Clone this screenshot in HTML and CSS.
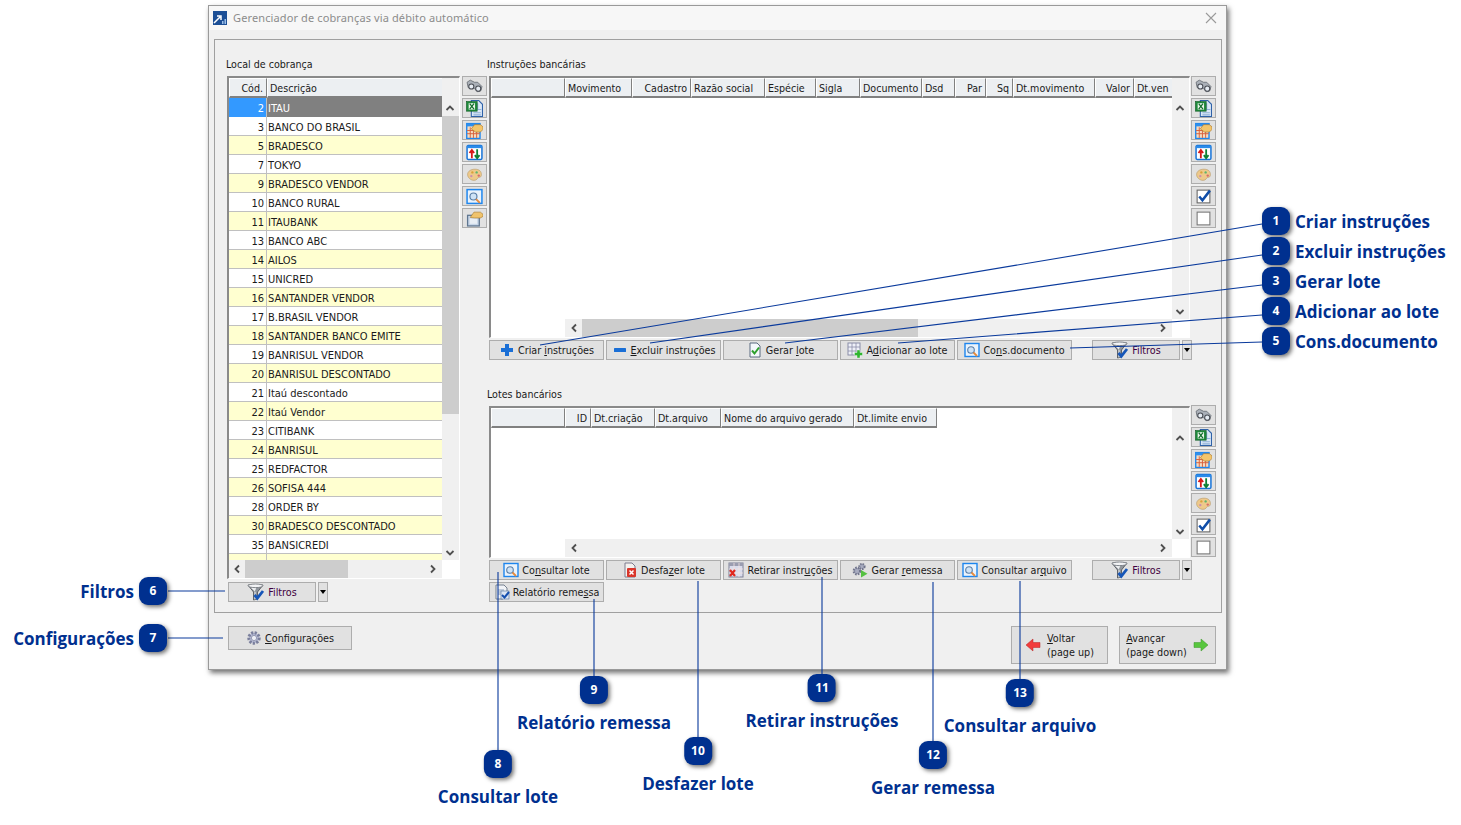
FILE: index.html
```html
<!DOCTYPE html>
<html lang="pt-BR">
<head>
<meta charset="utf-8">
<title>Gerenciador de cobranças via débito automático</title>
<link rel="stylesheet" href="styles.css">
</head>
<body>
<svg class="sprite" width="0" height="0" aria-hidden="true">
  <symbol id="i-bino" viewBox="0 0 16 16"><path d="M1 4l3-2 4 2 3 0 4 4-1 4-3 1-3-3-3 0-3-1z" fill="#aab0b8" stroke="#5c6168" stroke-width=".7"/><circle cx="5" cy="8" r="2.400" fill="#e6ecf3" stroke="#4a4e55" stroke-width="1"/><circle cx="11.500" cy="10" r="2.400" fill="#e6ecf3" stroke="#4a4e55" stroke-width="1"/></symbol>
  <symbol id="i-excel" viewBox="0 0 16 16"><path d="M5 0.500h7l3.500 3.500v11.500H5z" fill="#dbe8f7" stroke="#2f62a8"/><path d="M7 12h7M7 14h7M11 3v6h3.500" stroke="#8fb0d8" fill="none"/><rect x="0.500" y="1.500" width="10" height="9" fill="#1f8a3b" stroke="#0e5c22" stroke-width=".6"/><rect x="2.500" y="3" width="6" height="6" fill="#e9f5ea"/><path d="M3.500 3.500l4 5M7.500 3.500l-4 5" stroke="#12702c" stroke-width="1.200"/></symbol>
  <symbol id="i-tablehand" viewBox="0 0 16 16"><rect x="0.700" y="1.500" width="12.500" height="14" fill="#f6dcc0" stroke="#1e86ee" stroke-width="1.300"/><rect x="0.700" y="1.500" width="12.500" height="2.600" fill="#2f8fec"/><path d="M4 5v10M7 5v10M10 5v10M1 8h12M1 11h12" stroke="#d8613c" stroke-width=".9"/><path d="M5 6.500l3-4h5.500L16 4.500v2.500l-2.500 2.500H9z" fill="#f3c56b" stroke="#a9762a" stroke-width=".6"/></symbol>
  <symbol id="i-sort" viewBox="0 0 16 16"><rect x="1" y="1.500" width="14" height="13" rx="1" fill="#fff" stroke="#1673d8" stroke-width="1.400"/><rect x="1" y="1.500" width="14" height="2.400" fill="#2b8bea"/><path d="M5.500 13.500V6M3.300 8.500l2.200-2.900 2.200 2.900" fill="none" stroke="#d81818" stroke-width="1.700"/><path d="M10.500 5v8M8.300 10.500l2.200 2.900 2.200-2.900" fill="none" stroke="#0f7f35" stroke-width="1.700"/></symbol>
  <symbol id="i-palette" viewBox="0 0 16 16"><path d="M1.500 8c0-3 3-5 7-5s6 2 6 5-2 2.500-3 3-1 2.500-4 2.500S1.500 11 1.500 8z" fill="#eec98a" stroke="#b99a66" stroke-width=".6"/><circle cx="6" cy="6" r="1.100" fill="#d9a13a"/><circle cx="10" cy="6" r="1.100" fill="#5db56c"/><circle cx="12" cy="9" r="1.100" fill="#d86a6a"/><circle cx="5" cy="9.500" r="1.100" fill="#c98fb0"/></symbol>
  <symbol id="i-find" viewBox="0 0 16 16"><rect x="1" y="1.500" width="14" height="13" fill="#eaf3fc" stroke="#1e86ee" stroke-width="1.400"/><circle cx="7" cy="8" r="3.300" fill="#cfe3f6" stroke="#5a7ea6" stroke-width="1.100"/><path d="M9.500 10.500l3.500 3.500" stroke="#e78b3c" stroke-width="1.800"/></symbol>
  <symbol id="i-handbox" viewBox="0 0 16 16"><rect x="1.500" y="5" width="11" height="10" fill="#c7d6e8" stroke="#5f7690" stroke-width="1.200"/><rect x="3.500" y="8" width="7" height="5" fill="#e8eef5"/><path d="M4 7l3.500-5h6L16 4v2l-2.500 1.500H8z" fill="#f0c36c" stroke="#a87a2c" stroke-width=".6"/></symbol>
  <symbol id="i-check" viewBox="0 0 16 16"><rect x="2" y="2" width="12" height="12" fill="#fff" stroke="#666" stroke-width="1"/><path d="M4 8l3 3.500L14 2.500" fill="none" stroke="#0f4da8" stroke-width="2.400"/></symbol>
  <symbol id="i-uncheck" viewBox="0 0 16 16"><rect x="2" y="2" width="12" height="12" fill="#fff" stroke="#777" stroke-width="1"/></symbol>
  <symbol id="i-plus" viewBox="0 0 16 16"><path d="M6 2h4v4h4v4h-4v4H6v-4H2V6h4z" fill="#1a6fd6"/></symbol>
  <symbol id="i-minus" viewBox="0 0 16 16"><rect x="2" y="6" width="12" height="4" rx=".6" fill="#1a6fd6"/></symbol>
  <symbol id="i-doccheck" viewBox="0 0 16 16"><path d="M3 1h7l3 3v11H3z" fill="#f4f7fb" stroke="#5a6b80"/><path d="M5 8.500l2.500 3L12 5.500" fill="none" stroke="#2da02d" stroke-width="2"/></symbol>
  <symbol id="i-gridplus" viewBox="0 0 16 16"><rect x="1" y="1" width="12" height="12" fill="#eef0f8" stroke="#8a8ea8"/><path d="M5 1v12M9 1v12M1 5h12M1 9h12" stroke="#8a8ea8" stroke-width=".8"/><path d="M10 8h3v2.500h2.500v3H13V16h-3v-2.500H7.500v-3H10z" fill="#2fb52f" stroke="#fff" stroke-width=".4"/></symbol>
  <symbol id="i-filter" viewBox="0 0 18 18"><path d="M1 2h15l-5.500 7v7l-4 1V9z" fill="#8f959c" stroke="#55595f" stroke-width=".9"/><path d="M3.500 4.500h6L7.500 9v7.500l1-.3V9z" fill="#eceef0"/><ellipse cx="8.500" cy="2.800" rx="7.500" ry="1.800" fill="#f2f3f5" stroke="#6d7278" stroke-width=".8"/><path d="M7.500 12l2.800 3.200L16 8" fill="none" stroke="#1656b8" stroke-width="2.800"/></symbol>
  <symbol id="i-gear" viewBox="0 0 16 16"><circle cx="8" cy="8" r="5.200" fill="#b9bdd6" stroke="#7a7f9c" stroke-width="3" stroke-dasharray="2.200 1.300"/><circle cx="8" cy="8" r="2.600" fill="#eef0f6" stroke="#7a7f9c" stroke-width=".7"/></symbol>
  <symbol id="i-docx" viewBox="0 0 16 16"><path d="M3 1h7l3 3v11H3z" fill="#f4f1ee" stroke="#7c7c8e"/><rect x="5" y="6" width="9" height="9" rx="1" fill="#d9362b"/><path d="M7.500 8.500l4 4M11.500 8.500l-4 4" stroke="#fff" stroke-width="1.500"/></symbol>
  <symbol id="i-gridx" viewBox="0 0 16 16"><rect x="1" y="1" width="14" height="14" fill="#d9dcec" stroke="#7f8298"/><rect x="1" y="1" width="14" height="3" fill="#9a9db0"/><path d="M6 1v14M11 1v14M1 7h14M1 11h14" stroke="#f3e3e3" stroke-width=".8"/><path d="M2 8l5 6M7 8l-5 6" stroke="#e0281e" stroke-width="2.200"/></symbol>
  <symbol id="i-gears" viewBox="0 0 16 16"><circle cx="5" cy="9" r="3.200" fill="#a8acc0" stroke="#71758c" stroke-width="2.400" stroke-dasharray="1.500 1.100"/><circle cx="10" cy="4.500" r="2.600" fill="#a8acc0" stroke="#71758c" stroke-width="2" stroke-dasharray="1.500 1"/><path d="M9 8l6.500 3.700L9 15.500z" fill="#56c142"/></symbol>
  <symbol id="i-report" viewBox="0 0 16 16"><path d="M2 1h8l3 3v4H9v7H2z" fill="#f1f3f7" stroke="#75808f"/><path d="M4 6h6M4 8h4M4 10h4" stroke="#8ea3bd"/><rect x="7" y="7" width="8" height="8" fill="#dbe5f3" stroke="#50709a" stroke-width=".6"/><path d="M8 11l2.500 2.500L15 8" fill="none" stroke="#144fae" stroke-width="2"/></symbol>
  <symbol id="i-left" viewBox="0 0 16 16"><path d="M1 8l7-6v3.500h7v5H8V14z" fill="#f23c3c" stroke="#b52525" stroke-width=".5"/></symbol>
  <symbol id="i-right" viewBox="0 0 16 16"><path d="M15 8L8 2v3.500H1v5h7V14z" fill="#58c63e" stroke="#3a942a" stroke-width=".5"/></symbol>
  <symbol id="i-up" viewBox="0 0 10 10"><path d="M1.500 7L5 3.500 8.500 7" fill="none" stroke="#505050" stroke-width="1.800"/></symbol>
  <symbol id="i-down" viewBox="0 0 10 10"><path d="M1.500 3L5 6.500 8.500 3" fill="none" stroke="#505050" stroke-width="1.800"/></symbol>
  <symbol id="i-prev" viewBox="0 0 10 10"><path d="M7 1.500L3.500 5 7 8.500" fill="none" stroke="#505050" stroke-width="1.800"/></symbol>
  <symbol id="i-next" viewBox="0 0 10 10"><path d="M3 1.500L6.500 5 3 8.500" fill="none" stroke="#505050" stroke-width="1.800"/></symbol>
</svg>

<main class="window">
  <header class="titlebar">
    <svg class="logo" viewBox="0 0 14 14"><rect width="14" height="14" fill="#1c4f96"/><path d="M1 12l6-6M4 5h4v4" fill="none" stroke="#fff" stroke-width="1.500"/><path d="M9 13v-3h1.500v3zM11.500 13V8H13v5z" fill="#9cc0ea"/></svg>
    <span class="title">Gerenciador de cobranças via débito automático</span>
    <svg class="close" viewBox="0 0 12 12"><path d="M1 1l10 10M11 1L1 11" stroke="#9a9a9a" stroke-width="1.100"/></svg>
  </header>

  <section class="group">
    <div class="col-left">
      <div class="label">Local de cobrança</div>
      <div class="with-tools">
        <div class="frame frame-left">
          <div class="grid-area">
            <div class="head">
              <div class="hc hc-cod r">Cód.</div>
              <div class="hc hc-desc">Descrição</div>
            </div>
            <div class="rows">
              <div class="row sel"><span class="code">2</span><span class="desc">ITAU</span></div>
              <div class="row"><span class="code">3</span><span class="desc">BANCO DO BRASIL</span></div>
              <div class="row alt"><span class="code">5</span><span class="desc">BRADESCO</span></div>
              <div class="row"><span class="code">7</span><span class="desc">TOKYO</span></div>
              <div class="row alt"><span class="code">9</span><span class="desc">BRADESCO VENDOR</span></div>
              <div class="row"><span class="code">10</span><span class="desc">BANCO RURAL</span></div>
              <div class="row alt"><span class="code">11</span><span class="desc">ITAUBANK</span></div>
              <div class="row"><span class="code">13</span><span class="desc">BANCO ABC</span></div>
              <div class="row alt"><span class="code">14</span><span class="desc">AILOS</span></div>
              <div class="row"><span class="code">15</span><span class="desc">UNICRED</span></div>
              <div class="row alt"><span class="code">16</span><span class="desc">SANTANDER VENDOR</span></div>
              <div class="row"><span class="code">17</span><span class="desc">B.BRASIL VENDOR</span></div>
              <div class="row alt"><span class="code">18</span><span class="desc">SANTANDER BANCO EMITE</span></div>
              <div class="row"><span class="code">19</span><span class="desc">BANRISUL VENDOR</span></div>
              <div class="row alt"><span class="code">20</span><span class="desc">BANRISUL DESCONTADO</span></div>
              <div class="row"><span class="code">21</span><span class="desc">Itaú descontado</span></div>
              <div class="row alt"><span class="code">22</span><span class="desc">Itaú Vendor</span></div>
              <div class="row"><span class="code">23</span><span class="desc">CITIBANK</span></div>
              <div class="row alt"><span class="code">24</span><span class="desc">BANRISUL</span></div>
              <div class="row"><span class="code">25</span><span class="desc">REDFACTOR</span></div>
              <div class="row alt"><span class="code">26</span><span class="desc">SOFISA 444</span></div>
              <div class="row"><span class="code">28</span><span class="desc">ORDER BY</span></div>
              <div class="row alt"><span class="code">30</span><span class="desc">BRADESCO DESCONTADO</span></div>
              <div class="row"><span class="code">35</span><span class="desc">BANSICREDI</span></div>
              <div class="row alt"><span class="code">36</span><span class="desc">ECOCREDI</span></div>
            </div>
          </div>
          <div class="vbar vbar-left">
            <svg class="chev"><use href="#i-up"/></svg>
            <div class="vthumb"></div>
            <svg class="chev"><use href="#i-down"/></svg>
          </div>
          <div class="hbar hbar-left">
            <svg class="chev"><use href="#i-prev"/></svg>
            <div class="hthumb hthumb-left"></div>
            <svg class="chev end"><use href="#i-next"/></svg>
          </div>
        </div>
        <div class="tools">
          <div class="tool"><svg class="ti"><use href="#i-bino"/></svg></div>
          <div class="tool"><svg class="ti"><use href="#i-excel"/></svg></div>
          <div class="tool"><svg class="ti"><use href="#i-tablehand"/></svg></div>
          <div class="tool"><svg class="ti"><use href="#i-sort"/></svg></div>
          <div class="tool"><svg class="ti"><use href="#i-palette"/></svg></div>
          <div class="tool"><svg class="ti"><use href="#i-find"/></svg></div>
          <div class="tool"><svg class="ti"><use href="#i-handbox"/></svg></div>
        </div>
      </div>
      <div class="btnrow btnrow-left">
        <div class="btn btn-filter"><svg class="bi bi-f"><use href="#i-filter"/></svg><span class="ftxt">Filtros</span></div>
        <div class="drop"></div>
      </div>
    </div>

    <div class="col-right">
      <div class="label">Instruções bancárias</div>
      <div class="with-tools">
        <div class="frame frame-top">
          <div class="grid-area">
            <div class="head">
              <div class="hc w-blank"></div>
              <div class="hc w-mov">Movimento</div>
              <div class="hc w-cad r">Cadastro</div>
              <div class="hc w-raz">Razão social</div>
              <div class="hc w-esp">Espécie</div>
              <div class="hc w-sig">Sigla</div>
              <div class="hc w-doc r">Documento</div>
              <div class="hc w-dsd">Dsd</div>
              <div class="hc w-par r">Par</div>
              <div class="hc w-sq r">Sq</div>
              <div class="hc w-dtm">Dt.movimento</div>
              <div class="hc w-val r">Valor</div>
              <div class="hc w-dtv">Dt.ven</div>
            </div>
          </div>
          <div class="vbar">
            <svg class="chev"><use href="#i-up"/></svg>
            <svg class="chev bottom"><use href="#i-down"/></svg>
          </div>
          <div class="hbar hbar-wide">
            <svg class="chev"><use href="#i-prev"/></svg>
            <div class="hthumb hthumb-top"></div>
            <svg class="chev end"><use href="#i-next"/></svg>
          </div>
        </div>
        <div class="tools">
          <div class="tool"><svg class="ti"><use href="#i-bino"/></svg></div>
          <div class="tool"><svg class="ti"><use href="#i-excel"/></svg></div>
          <div class="tool"><svg class="ti"><use href="#i-tablehand"/></svg></div>
          <div class="tool"><svg class="ti"><use href="#i-sort"/></svg></div>
          <div class="tool"><svg class="ti"><use href="#i-palette"/></svg></div>
          <div class="tool"><svg class="ti"><use href="#i-check"/></svg></div>
          <div class="tool"><svg class="ti"><use href="#i-uncheck"/></svg></div>
        </div>
      </div>
      <div class="btnrow">
        <div class="btn"><svg class="bi"><use href="#i-plus"/></svg><span>Criar <u>i</u>nstruções</span></div>
        <div class="btn"><svg class="bi"><use href="#i-minus"/></svg><span><u>E</u>xcluir instruções</span></div>
        <div class="btn"><svg class="bi"><use href="#i-doccheck"/></svg><span>Gerar <u>l</u>ote</span></div>
        <div class="btn"><svg class="bi"><use href="#i-gridplus"/></svg><span>A<u>d</u>icionar ao lote</span></div>
        <div class="btn"><svg class="bi"><use href="#i-find"/></svg><span>Co<u>n</u>s.documento</span></div>
        <div class="btn btn-filter push"><svg class="bi bi-f"><use href="#i-filter"/></svg><span class="ftxt">Filtros</span></div>
        <div class="drop"></div>
      </div>

      <div class="label label-lower">Lotes bancários</div>
      <div class="with-tools">
        <div class="frame frame-bottom">
          <div class="grid-area">
            <div class="head">
              <div class="hc w-blank"></div>
              <div class="hc w-id r">ID</div>
              <div class="hc w-dtc">Dt.criação</div>
              <div class="hc w-dta">Dt.arquivo</div>
              <div class="hc w-nome">Nome do arquivo gerado</div>
              <div class="hc w-lim">Dt.limite envio</div>
            </div>
          </div>
          <div class="vbar">
            <svg class="chev"><use href="#i-up"/></svg>
            <svg class="chev bottom"><use href="#i-down"/></svg>
          </div>
          <div class="hbar hbar-wide">
            <svg class="chev"><use href="#i-prev"/></svg>
            <svg class="chev end"><use href="#i-next"/></svg>
          </div>
        </div>
        <div class="tools tools-lower">
          <div class="tool"><svg class="ti"><use href="#i-bino"/></svg></div>
          <div class="tool"><svg class="ti"><use href="#i-excel"/></svg></div>
          <div class="tool"><svg class="ti"><use href="#i-tablehand"/></svg></div>
          <div class="tool"><svg class="ti"><use href="#i-sort"/></svg></div>
          <div class="tool"><svg class="ti"><use href="#i-palette"/></svg></div>
          <div class="tool"><svg class="ti"><use href="#i-check"/></svg></div>
          <div class="tool"><svg class="ti"><use href="#i-uncheck"/></svg></div>
        </div>
      </div>
      <div class="btnrow">
        <div class="btn"><svg class="bi"><use href="#i-find"/></svg><span>Co<u>n</u>sultar lote</span></div>
        <div class="btn"><svg class="bi"><use href="#i-docx"/></svg><span>Desfa<u>z</u>er lote</span></div>
        <div class="btn"><svg class="bi"><use href="#i-gridx"/></svg><span>Retirar instr<u>u</u>ções</span></div>
        <div class="btn"><svg class="bi"><use href="#i-gears"/></svg><span>Gerar <u>r</u>emessa</span></div>
        <div class="btn"><svg class="bi"><use href="#i-find"/></svg><span>Consultar ar<u>q</u>uivo</span></div>
        <div class="btn btn-filter push"><svg class="bi bi-f"><use href="#i-filter"/></svg><span class="ftxt">Filtros</span></div>
        <div class="drop"></div>
      </div>
      <div class="btnrow">
        <div class="btn"><svg class="bi"><use href="#i-report"/></svg><span>Relatório reme<u>s</u>sa</span></div>
      </div>
    </div>
  </section>

  <footer class="footer">
    <div class="btn btn-config"><svg class="bi"><use href="#i-gear"/></svg><span><u>C</u>onfigurações</span></div>
    <div class="nav">
      <div class="btn btn-nav"><svg class="bi"><use href="#i-left"/></svg><span class="navtxt"><u>V</u>oltar<br>(page up)</span></div>
      <div class="btn btn-nav"><span class="navtxt"><u>A</u>vançar<br>(page down)</span><svg class="bi"><use href="#i-right"/></svg></div>
    </div>
  </footer>
</main>

<svg class="leaders" width="1461" height="825" aria-hidden="true">
  <path d="M1262 224L540 345M1262 255L650 343M1262 285L785 343M1262 315L898 343M1262 342L1070 348M168 591H225M168 638H223M498 750V572M594 676V599M698 737V581M822 674V577M933 741V582M1020 679V581"/>
</svg>

<div class="cal cal-right c1"><b class="badge">1</b><span>Criar instruções</span></div>
<div class="cal cal-right c2"><b class="badge">2</b><span>Excluir instruções</span></div>
<div class="cal cal-right c3"><b class="badge">3</b><span>Gerar lote</span></div>
<div class="cal cal-right c4"><b class="badge">4</b><span>Adicionar ao lote</span></div>
<div class="cal cal-right c5"><b class="badge">5</b><span>Cons.documento</span></div>
<div class="cal cal-left c6"><span>Filtros</span><b class="badge">6</b></div>
<div class="cal cal-left c7"><span>Configurações</span><b class="badge">7</b></div>
<div class="cal cal-down c8"><b class="badge">8</b><span>Consultar lote</span></div>
<div class="cal cal-down c9"><b class="badge">9</b><span>Relatório remessa</span></div>
<div class="cal cal-down c10"><b class="badge">10</b><span>Desfazer lote</span></div>
<div class="cal cal-down c11"><b class="badge">11</b><span>Retirar instruções</span></div>
<div class="cal cal-down c12"><b class="badge">12</b><span>Gerar remessa</span></div>
<div class="cal cal-down c13"><b class="badge">13</b><span>Consultar arquivo</span></div>
</body>
</html>
```
FILE: styles.css
```css
* { box-sizing: border-box; }
html, body { margin: 0; padding: 0; }
body {
  width: 1461px;
  height: 825px;
  background: #fff;
  overflow: hidden;
  position: relative;
  font-family: "DejaVu Sans Condensed", "DejaVu Sans", sans-serif;
  font-size: 10.6px;
  color: #1a1a1a;
}
.sprite { position: absolute; }

/* window */
.window {
  position: absolute;
  left: 208px;
  top: 5px;
  width: 1019px;
  height: 665px;
  background: #f0f0f0;
  border: 1px solid #9a9a9a;
  box-shadow: 2px 3px 5px rgba(0,0,0,.55);
  display: flex;
  flex-direction: column;
  padding: 0 4px 0 5px;
}
.titlebar {
  height: 24px;
  margin: 0 -4px 0 -5px;
  padding: 0 9px 0 4px;
  background: #f7f7f7;
  display: flex;
  align-items: center;
  gap: 6px;
}
.logo { width: 14px; height: 14px; }
.title { font-family: "Noto Sans", sans-serif; font-size: 11px; color: #8c8c8c; flex: 1; letter-spacing: .12px; padding-bottom: 2px; }
.close { width: 12px; height: 12px; }

.group {
  margin-top: 9px;
  height: 574px;
  flex: none;
  border: 1px solid #a0a0a0;
  padding: 16px 0 0 11px;
  display: flex;
}
.col-left { width: 261px; flex: none; }
.col-right { width: 729px; flex: none; }
.label { height: 16px; line-height: 16px; margin-bottom: 4px; }
.col-left .with-tools { margin-left: 1px; }
.col-left .btnrow { margin-left: 2px; }
.col-right .with-tools, .col-right .btnrow { margin-left: 2px; }
.label-lower { margin-top: 26px; }
.with-tools { display: flex; gap: 2px; }
.col-right .with-tools { gap: 1px; }

/* data grid frame */
.frame {
  display: grid;
  grid-template-columns: 1fr 17px;
  grid-template-rows: 1fr 18px;
  background: #fff;
  border-top: 2px solid #8a8a8a;
  border-left: 2px solid #8a8a8a;
  border-right: 1px solid #fff;
  border-bottom: 1px solid #fff;
  flex: none;
}
.frame-left { width: 233px; height: 503px; }
.frame-top { width: 701px; height: 262px; }
.frame-bottom { width: 701px; height: 152px; }
.grid-area { min-width: 0; min-height: 0; overflow: hidden; display: flex; flex-direction: column; }
.head { display: flex; height: 20px; flex: none; }
.hc {
  height: 20px;
  line-height: 18px;
  padding: 0 3px 0 2px;
  background: #eceff2;
  border-top: 1px solid #fff;
  border-left: 1px solid #fff;
  border-right: 1px solid #808080;
  border-bottom: 2px solid #808080;
  white-space: nowrap;
  overflow: hidden;
  flex: none;
}
.r { text-align: right; }
.hc-cod { width: 38px; }
.hc-desc { width: 176px; border-right: 0; }
.w-blank { width: 74px; }
.w-mov { width: 67px; }
.w-cad { width: 59px; }
.w-raz { width: 74px; }
.w-esp { width: 51px; }
.w-sig { width: 44px; }
.w-doc { width: 62px; }
.w-dsd { width: 33px; }
.w-par { width: 31px; }
.w-sq { width: 27px; }
.w-dtm { width: 82px; }
.w-val { width: 39px; }
.w-dtv { width: 39px; border-right: 0; }
.w-id { width: 26px; }
.w-dtc { width: 64px; }
.w-dta { width: 66px; }
.w-nome { width: 133px; }
.w-lim { width: 83px; }

.rows { flex: 1; overflow: hidden; font-size: 11px; }
.row { display: flex; height: 19px; line-height: 21px; border-bottom: 1px solid #c0c0c0; }
.row.alt { background: #ffffd0; }
.code { width: 38px; padding-right: 2px; text-align: right; border-right: 1px solid #c0c0c0; flex: none; }
.desc { padding-left: 1px; white-space: nowrap; }
.row.sel { background: #808080; color: #fff; border-bottom: 0; }
.row.sel .code { background: #3399ff; }

/* scrollbars */
.vbar {
  grid-row: 1;
  grid-column: 2;
  background: #f0f0f0;
  display: flex;
  flex-direction: column;
  align-items: center;
  padding: 25px 2px 2px 0;
}
.vthumb { width: 17px; height: 298px; background: #cdcdcd; margin: 3px -2px auto 0; }
.bottom { margin-top: auto; }
.chev { width: 10px; height: 10px; flex: none; }
.hbar {
  grid-row: 2;
  grid-column: 1;
  background: #f0f0f0;
  display: flex;
  align-items: center;
  padding: 0 4px;
}
.hbar-wide { margin-left: 74px; }
.hbar-left { padding-left: 3px; }
.end { margin-left: auto; }
.hthumb { height: 18px; background: #cdcdcd; margin-left: 3px; }
.hthumb-left { width: 103px; }
.hthumb-top { width: 336px; }

/* toolbars */
.tools { display: flex; flex-direction: column; gap: 2px; flex: none; width: 25px; }
.tools-lower { margin-top: -1px; }
.tool {
  width: 25px;
  height: 20px;
  border: 1px solid #adadad;
  background: #e1e1e1;
  display: flex;
  align-items: center;
  justify-content: center;
}
.ti { width: 17px; height: 17px; margin-right: 1px; }

/* buttons */
.btnrow { display: flex; gap: 2px; margin-top: 2px; height: 20px; width: 703px; }
.btnrow-left { margin-top: 3px; width: auto; }
.btn {
  width: 115px;
  height: 100%;
  border: 1px solid #adadad;
  background: #e1e1e1;
  display: flex;
  align-items: center;
  justify-content: center;
  gap: 3px;
  white-space: nowrap;
  flex: none;
  font-size: 10.7px;
}
.bi { width: 16px; height: 16px; flex: none; }
.bi-f { width: 18px; height: 18px; }
.btn-filter { width: 88px; }
.ftxt { color: #400040; }
.push { margin-left: auto; }
.drop {
  width: 10px;
  height: 100%;
  border: 1px solid #adadad;
  background: #e1e1e1;
  position: relative;
  flex: none;
}
.drop::after {
  content: "";
  position: absolute;
  left: 1px;
  top: 7px;
  border-left: 3.5px solid transparent;
  border-right: 3.5px solid transparent;
  border-top: 4px solid #000;
}

/* footer */
.footer {
  display: flex;
  justify-content: space-between;
  padding: 13px 6px 0 14px;
  align-items: flex-start;
}
.btn-config { width: 124px; height: 24px; }
.nav { display: flex; gap: 11px; }
.btn-nav { width: 97px; height: 38px; gap: 6px; }
.navtxt { line-height: 14px; padding-top: 1px; }

/* annotations */
.leaders { position: absolute; left: 0; top: 0; pointer-events: none; }
.leaders path { fill: none; stroke: #0a3a9c; stroke-width: 1.1; }
.badge {
  width: 28px;
  height: 28px;
  border-radius: 9px;
  background: #00308f;
  color: #fff;
  font: 700 12px/28px "Open Sans", sans-serif;
  text-align: center;
  box-shadow: 2px 2px 4px rgba(0,0,0,.55);
  flex: none;
}
.cal {
  position: absolute;
  display: flex;
  align-items: center;
  color: #00308f;
  font: 700 17px/24px "Open Sans", sans-serif;
  white-space: nowrap;
}
.cal span { padding-top: 1px; }
.cal-right { left: 1262px; gap: 5px; }
.cal-left { right: 1294px; gap: 5px; }
.cal-down { flex-direction: column; gap: 6px; transform: translateX(-50%); }
.c1 { top: 207px; }
.c2 { top: 237px; }
.c3 { top: 267px; }
.c4 { top: 297px; }
.c5 { top: 327px; }
.c6 { top: 577px; }
.c7 { top: 624px; }
.c8 { left: 498px; top: 750px; }
.c9 { left: 594px; top: 676px; }
.c10 { left: 698px; top: 737px; }
.c11 { left: 822px; top: 674px; }
.c12 { left: 933px; top: 741px; }
.c13 { left: 1020px; top: 679px; }
```
